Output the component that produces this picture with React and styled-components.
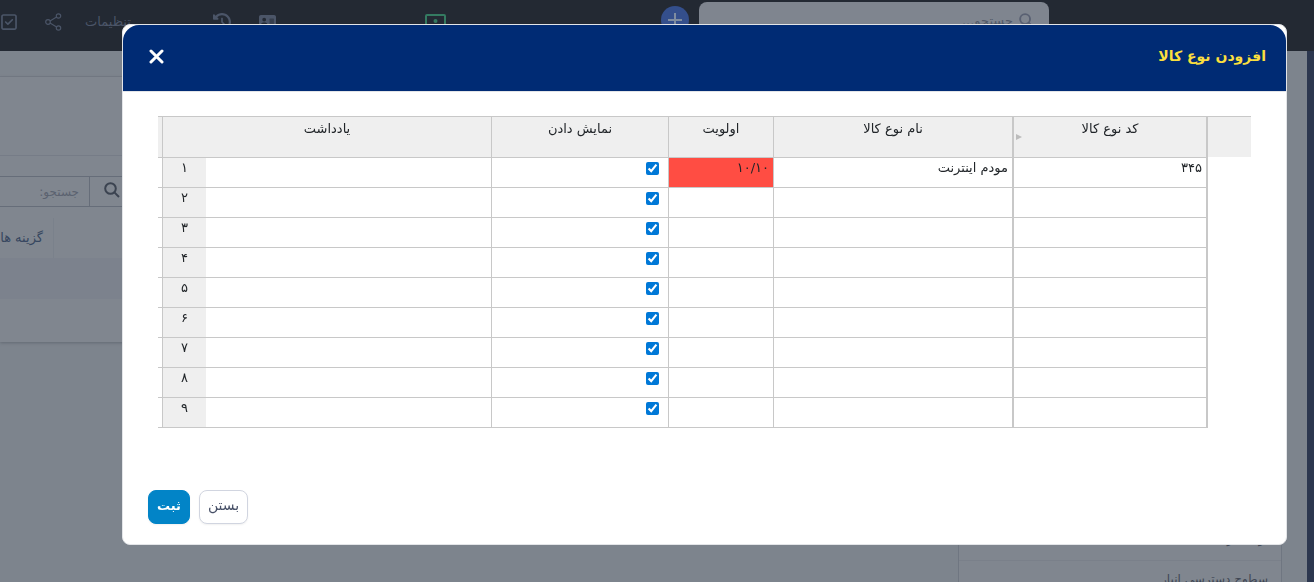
import React, { useState } from "react";
import styled, { createGlobalStyle, css } from "styled-components";
import { FaRegSquareCheck, FaAddressCard, FaClockRotateLeft } from "react-icons/fa6";

const GlobalStyle = createGlobalStyle`
  * {
    box-sizing: border-box;
  }
  body {
    margin: 0;
    direction: rtl;
    background: #7d848d;
    font-family: "DejaVu Sans", "Noto Sans", sans-serif;
    font-size: 13px;
    line-height: 20px;
    color: #212529;
    overflow: hidden;
  }
  button, input {
    font-family: inherit;
  }
`;

const Page = styled.div`
  height: 100vh;
  overflow: hidden;
`;

const TopBar = styled.header`
  display: flex;
  justify-content: space-between;
  align-items: flex-start;
  height: 51px;
  padding-right: 265px;
  background: #232933;
`;

const SearchGroup = styled.div`
  display: flex;
  align-items: flex-start;
  gap: 10px;
`;

const TopSearch = styled.label`
  display: flex;
  align-items: center;
  gap: 6px;
  width: 350px;
  height: 36px;
  margin-top: 2px;
  padding: 0 15px;
  border-radius: 8px;
  background: #7f858f;
  color: #596072;
`;

const TopSearchInput = styled.input`
  flex: 1;
  min-width: 0;
  padding: 0;
  border: 0;
  background: transparent;
  font-size: 13px;
  &::placeholder {
    color: #525a69;
    opacity: 1;
  }
`;

const AddButton = styled.button`
  width: 28px;
  height: 28px;
  margin-top: 6px;
  padding: 6px;
  border: 0;
  border-radius: 50%;
  background: #344f8c;
  color: #7f8da0;
`;

const ToolGroup = styled.nav`
  display: flex;
  direction: ltr;
  align-items: center;
  height: 43px;
  color: #4b5568;
`;

const Tool = styled.a`
  display: flex;
  color: ${({ $color }) => $color || "inherit"};
  margin-left: ${({ $space }) => $space}px;
  font-size: ${({ $size }) => $size || 16}px;
  text-decoration: none;
`;

const Main = styled.main`
  min-height: 531px;
  border-right: 7px solid #2c374f;
`;

const Strip = styled.div`
  height: 26px;
  margin-right: 60px;
  border-bottom: 1px solid #747a85;
`;

const ListPanel = styled.section`
  margin-right: 60px;
  background: #80868f;
  box-shadow: 0 1px 3px #636973;
`;

const PanelHead = styled.div`
  height: 79px;
  border-bottom: 1px solid #767c87;
`;

const PanelFilter = styled.div`
  display: flex;
  direction: ltr;
  height: 62px;
  padding: 20px 0 11px;
`;

const FilterInput = styled.input`
  width: 90px;
  padding: 0 10px;
  border: 1px solid #666d79;
  border-left: 0;
  background: transparent;
  direction: rtl;
  font-size: 12px;
  &::placeholder {
    color: #5b6270;
    opacity: 1;
  }
`;

const FilterButton = styled.button`
  width: 44px;
  padding: 0 14px;
  border: 1px solid #666d79;
  border-left: 0;
  background: transparent;
  color: #3b4350;
`;

const PanelRow = styled.div`
  display: flex;
  direction: ltr;
  align-items: center;
  height: ${({ $height }) => $height}px;
  background: ${({ $shade }) => ($shade ? "#7c828d" : "transparent")};
`;

const OptionsCell = styled.div`
  display: flex;
  justify-content: flex-start;
  align-items: center;
  width: 54px;
  height: 100%;
  padding-right: 10px;
  border-right: 1px solid #7a818b;
  color: #36465f;
  direction: rtl;
  white-space: nowrap;
`;

const SideMenu = styled.ul`
  width: 324px;
  margin: 178px 25px 0 0;
  padding: 0;
  border: 1px solid #6f7681;
  background: #80868f;
  list-style: none;
`;

const SideItem = styled.li`
  height: 40px;
  padding: 8px 13px;
  border-bottom: 1px solid #7a808a;
`;

const SideLink = styled.a`
  color: #3f4754;
  font-size: 12px;
  text-decoration: none;
`;

const Overlay = styled.div`
  position: fixed;
  inset: 0;
  padding: 24px 27px 37px 122px;
`;

const Dialog = styled.section`
  display: flex;
  flex-direction: column;
  border: 1px solid #e3e5e8;
  border-radius: 8px;
  background: #fff;
`;

const DialogHeader = styled.header`
  display: flex;
  justify-content: space-between;
  align-items: center;
  height: 67px;
  padding: 0 20px 4px 26px;
  border-bottom: 1px solid #e3e5e8;
  border-radius: 16px 16px 0 0;
  background: #002b74;
`;

const DialogTitle = styled.h2`
  margin: 0;
  color: #fbdf3e;
  font-size: 14px;
  font-weight: 700;
  line-height: 28px;
`;

const CloseButton = styled.button`
  display: flex;
  padding: 0;
  border: 0;
  background: none;
  color: #fff;
`;

const DialogBody = styled.div`
  padding: 24px 35px 62px;
`;

const Grid = styled.table`
  width: 100%;
  table-layout: fixed;
  border-collapse: separate;
  border-spacing: 0;
`;

const Col = styled.col`
  width: ${({ $width }) => ($width ? `${$width}px` : "auto")};
`;

const line = "#c8c8c8";

const HeadCell = styled.th`
  height: 42px;
  padding: 2px 4px 0;
  border-top: 1px solid ${line};
  border-bottom: 1px solid ${line};
  border-right: ${({ $edge = 0 }) => $edge}px solid ${line};
  background: #efefef;
  font-weight: 400;
  vertical-align: top;
  ${({ $blank }) =>
    $blank &&
    css`
      border-bottom-color: transparent;
      background-clip: padding-box;
    `}
`;

const Cell = styled.td`
  height: 30px;
  padding: 0 4px;
  border-bottom: 1px solid ${line};
  border-right: ${({ $edge = 1 }) => $edge}px solid ${line};
  background: ${({ $alert }) => ($alert ? "#ff4d43" : "#fff")};
  vertical-align: top;
`;

const BlankCell = styled.td`
  padding: 0;
`;

const RowNumber = styled.th`
  height: 30px;
  padding: 0;
  border-bottom: 1px solid ${line};
  background: #efefef;
  font-weight: 400;
  vertical-align: top;
`;

const Tick = styled.input`
  display: block;
  width: 13px;
  height: 13px;
  margin: 4px 5px 0 0;
  accent-color: #0078d7;
`;

const FrozenHead = styled(HeadCell)`
  position: relative;
`;

const Marker = styled.span`
  position: absolute;
  left: 2px;
  bottom: 17px;
  border: 3px solid transparent;
  border-left: 6px solid #bcbcbc;
  border-right: 0;
`;

const DialogFooter = styled.footer`
  display: flex;
  justify-content: flex-end;
  gap: 9px;
  padding: 0 25px 20px;
`;

const FooterButton = styled.button`
  height: 34px;
  padding: 0 8px 4px;
  border: 1px solid ${({ $primary }) => ($primary ? "#0284c7" : "#d1d5e0")};
  border-radius: 8px;
  background: ${({ $primary }) => ($primary ? "#0284c7" : "#fff")};
  color: ${({ $primary }) => ($primary ? "#fff" : "#475067")};
  font-size: ${({ $primary }) => ($primary ? 13 : 14)}px;
  font-weight: ${({ $primary }) => ($primary ? 700 : 400)};
  box-shadow: 0 1px 2px rgba(0, 0, 0, 0.06);
`;

const SearchIcon = ({ size }) => (
  <svg width={size} height={size} viewBox="0 0 16 16" fill="none" stroke="currentColor" strokeWidth="2">
    <circle cx="6.5" cy="6.5" r="5.3" />
    <path d="M10.4 10.4L15 15" />
  </svg>
);

const ShareIcon = () => (
  <svg width="17" height="18" viewBox="0 0 17 18" fill="none" stroke="currentColor" strokeWidth="1.2">
    <circle cx="3" cy="9" r="2.3" />
    <circle cx="13.5" cy="3" r="2.2" />
    <circle cx="13.5" cy="15" r="2.2" />
    <path d="M5 7.9L11.6 4.1M5 10.1L11.6 13.9" />
  </svg>
);

const initialRows = ["۱", "۲", "۳", "۴", "۵", "۶", "۷", "۸", "۹"].map(number => ({
  number,
  code: number === "۱" ? "۳۴۵" : "",
  name: number === "۱" ? "مودم اینترنت" : "",
  priority: number === "۱" ? "۱۰/۱۰" : "",
  visible: true
}));

const App = () => {
  const [rows, setRows] = useState(initialRows);

  const toggle = number =>
    setRows(rows.map(row => (row.number === number ? { ...row, visible: !row.visible } : row)));

  return (
    <Page>
      <GlobalStyle />
      <TopBar>
        <SearchGroup>
          <TopSearch>
            <SearchIcon size={15} />
            <TopSearchInput type="search" placeholder="جستجو..." />
          </TopSearch>
          <AddButton type="button" aria-label="افزودن">
            <svg width="16" height="16" viewBox="0 0 16 16" stroke="currentColor" strokeWidth="2">
              <path d="M8 1v14M1 8h14" />
            </svg>
          </AddButton>
        </SearchGroup>
        <ToolGroup>
          <Tool href="#" $space={0} $size={18}><FaRegSquareCheck /></Tool>
          <Tool href="#" $space={27}><ShareIcon /></Tool>
          <Tool href="#" $space={23} $size={13}>تنظیمات</Tool>
          <Tool href="#" $space={82} $size={18}><FaClockRotateLeft /></Tool>
          <Tool href="#" $space={28} $size={17}><FaAddressCard /></Tool>
          <Tool href="#" $space={149} $color="#347a61">
            <svg width="21" height="16" viewBox="0 0 21 16" fill="none" stroke="currentColor" strokeWidth="2">
              <rect x="1" y="1" width="19" height="14" rx="1" />
              <circle cx="10.5" cy="7" r="2" fill="currentColor" stroke="none" />
            </svg>
          </Tool>
        </ToolGroup>
      </TopBar>
      <Main>
        <Strip />
        <ListPanel>
          <PanelHead />
          <PanelFilter>
            <FilterInput type="search" placeholder="جستجو:" aria-label="جستجو" />
            <FilterButton type="button" aria-label="جستجو"><SearchIcon size={16} /></FilterButton>
          </PanelFilter>
          <PanelRow $height={40}>
            <OptionsCell>گزینه ها</OptionsCell>
          </PanelRow>
          <PanelRow $height={41} $shade />
          <PanelRow $height={43} />
        </ListPanel>
        <SideMenu>
          <SideItem><SideLink href="#">تولید جزییات</SideLink></SideItem>
          <SideItem><SideLink href="#">سطوح دسترسی انبار</SideLink></SideItem>
        </SideMenu>
      </Main>
      <Overlay>
        <Dialog role="dialog" aria-labelledby="dialog-title">
          <DialogHeader>
            <DialogTitle id="dialog-title">افزودن نوع کالا</DialogTitle>
            <CloseButton type="button" aria-label="بستن">
              <svg width="15" height="15" viewBox="0 0 15 15" stroke="currentColor" strokeWidth="3" strokeLinecap="round">
                <path d="M2 2l11 11M13 2L2 13" />
              </svg>
            </CloseButton>
          </DialogHeader>
          <DialogBody>
            <Grid>
              <colgroup>
                <Col $width={43} />
                <Col $width={194} />
                <Col $width={240} />
                <Col $width={105} />
                <Col $width={177} />
                <Col />
                <Col $width={43} />
                <Col $width={5} />
              </colgroup>
              <thead>
                <tr>
                  <HeadCell $blank />
                  <FrozenHead $edge={2}>
                    کد نوع کالا
                    <Marker />
                  </FrozenHead>
                  <HeadCell $edge={2}>نام نوع کالا</HeadCell>
                  <HeadCell $edge={1}>اولویت</HeadCell>
                  <HeadCell $edge={1} id="col-visible">نمایش دادن</HeadCell>
                  <HeadCell $edge={1} colSpan={2}>یادداشت</HeadCell>
                  <HeadCell $edge={1} />
                </tr>
              </thead>
              <tbody>
                {rows.map(row => (
                  <tr key={row.number}>
                    <BlankCell />
                    <Cell $edge={2}>{row.code}</Cell>
                    <Cell $edge={2}>{row.name}</Cell>
                    <Cell $alert={!!row.priority}>{row.priority}</Cell>
                    <Cell>
                      <Tick
                        type="checkbox"
                        aria-labelledby="col-visible"
                        checked={row.visible}
                        onChange={() => toggle(row.number)}
                      />
                    </Cell>
                    <Cell />
                    <RowNumber scope="row">{row.number}</RowNumber>
                    <Cell />
                  </tr>
                ))}
              </tbody>
            </Grid>
          </DialogBody>
          <DialogFooter>
            <FooterButton type="button">بستن</FooterButton>
            <FooterButton type="submit" $primary>ثبت</FooterButton>
          </DialogFooter>
        </Dialog>
      </Overlay>
    </Page>
  );
};

export default App;
